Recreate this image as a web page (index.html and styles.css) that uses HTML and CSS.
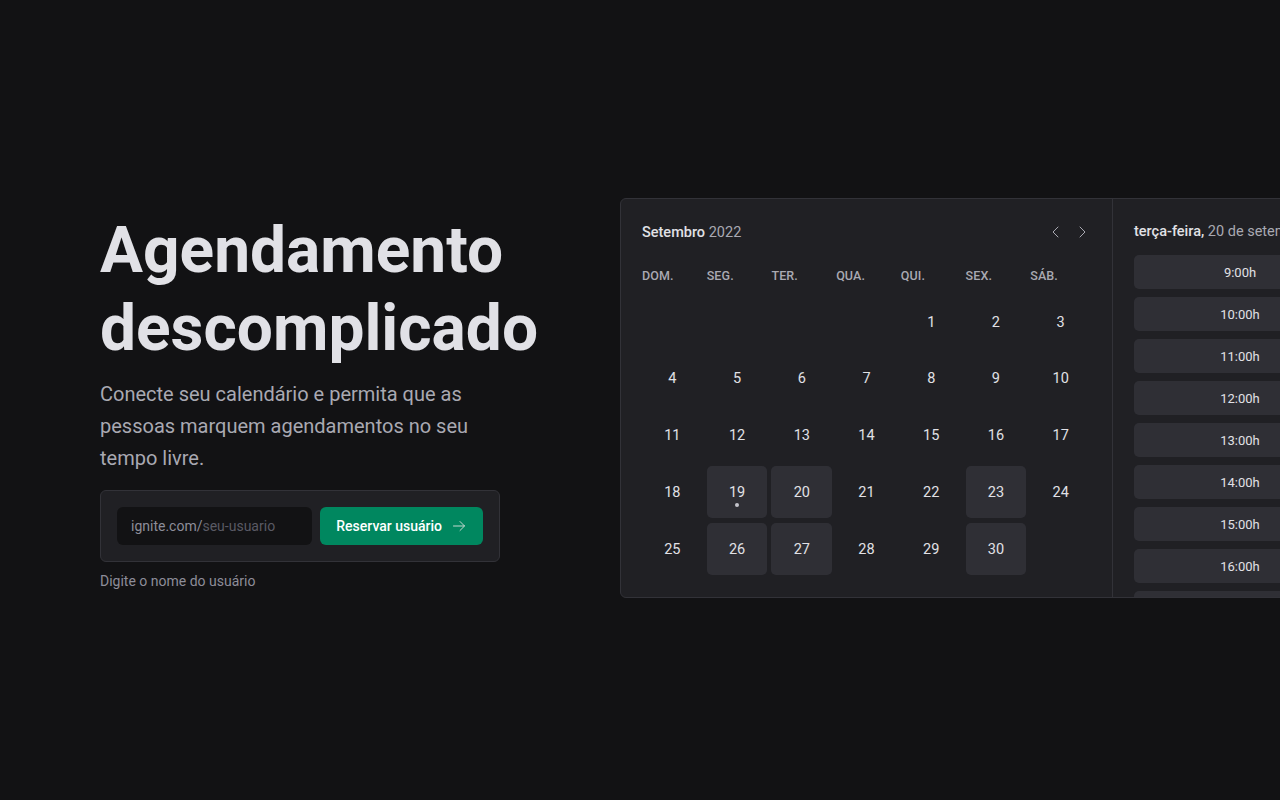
FILE: index.html
```html
<!DOCTYPE html>
<html lang="pt-BR">
<head>
<meta charset="utf-8">
<title>Ignite Call</title>
<link rel="stylesheet" href="styles.css">
</head>
<body>
<main class="container">
  <section class="hero">
    <h1 class="title">Agendamento descomplicado</h1>
    <p class="lead">Conecte seu calendário e permita que as pessoas marquem agendamentos no seu tempo livre.</p>
    <form class="claim">
      <label class="input">
        <span class="prefix">ignite.com/</span>
        <input type="text" placeholder="seu-usuario">
      </label>
      <button type="button" class="btn">
        Reservar usuário
        <svg width="16" height="16" viewBox="0 0 256 256" aria-hidden="true"><path d="M40 128h176M144 56l72 72-72 72" fill="none" stroke="currentColor" stroke-width="16" stroke-linecap="round" stroke-linejoin="round"/></svg>
      </button>
    </form>
    <p class="annotation">Digite o nome do usuário</p>
  </section>

  <section class="preview">
    <div class="calendar">
      <div class="cal-header">
        <p class="cal-title">Setembro <span>2022</span></p>
        <div class="cal-actions">
          <button type="button" class="nav"><svg width="16" height="16" viewBox="0 0 256 256"><path d="M160 208l-80-80 80-80" fill="none" stroke="currentColor" stroke-width="16" stroke-linecap="round" stroke-linejoin="round"/></svg></button>
          <button type="button" class="nav"><svg width="16" height="16" viewBox="0 0 256 256"><path d="M96 48l80 80-80 80" fill="none" stroke="currentColor" stroke-width="16" stroke-linecap="round" stroke-linejoin="round"/></svg></button>
        </div>
      </div>
      <div class="grid weekdays">
        <div class="wd">DOM.</div><div class="wd">SEG.</div><div class="wd">TER.</div><div class="wd">QUA.</div><div class="wd">QUI.</div><div class="wd">SEX.</div><div class="wd">SÁB.</div>
      </div>
      <div class="grid days">
        <div></div><div></div><div></div><div></div>
        <div class="day">1</div><div class="day">2</div><div class="day">3</div>
        <div class="day">4</div><div class="day">5</div><div class="day">6</div><div class="day">7</div><div class="day">8</div><div class="day">9</div><div class="day">10</div>
        <div class="day">11</div><div class="day">12</div><div class="day">13</div><div class="day">14</div><div class="day">15</div><div class="day">16</div><div class="day">17</div>
        <div class="day">18</div><div class="day avail today">19</div><div class="day avail">20</div><div class="day">21</div><div class="day">22</div><div class="day avail">23</div><div class="day">24</div>
        <div class="day">25</div><div class="day avail">26</div><div class="day avail">27</div><div class="day">28</div><div class="day">29</div><div class="day avail">30</div><div></div>
      </div>
    </div>
    <div class="times">
      <p class="times-title">terça-feira, <span>20 de setembro</span></p>
      <div class="time-list">
        <div class="time">9:00h</div>
        <div class="time">10:00h</div>
        <div class="time">11:00h</div>
        <div class="time">12:00h</div>
        <div class="time">13:00h</div>
        <div class="time">14:00h</div>
        <div class="time">15:00h</div>
        <div class="time">16:00h</div>
        <div class="time">17:00h</div>
      </div>
    </div>
  </section>
</main>
</body>
</html>
```
FILE: styles.css
```css
* { box-sizing: border-box; }
html, body { margin: 0; padding: 0; }
body {
  background: #121214;
  color: #e1e1e6;
  font-family: Roboto, "Noto Sans", sans-serif;
  height: 800px;
  overflow: hidden;
  -webkit-font-smoothing: antialiased;
}
.container {
  margin-left: 60px;
  height: 800px;
  display: flex;
  align-items: center;
  gap: 80px;
}
.hero {
  width: 480px;
  flex-shrink: 0;
  padding: 0 40px;
}
.title {
  margin: 0;
  padding-top: 3px;
  font-size: 64px;
  line-height: 78px;
  font-weight: 700;
  color: #e1e1e6;
}
.lead {
  margin: 10px 0 0;
  font-size: 20px;
  line-height: 32px;
  color: #a9a9b2;
}
.claim {
  margin-top: 16px;
  display: grid;
  grid-template-columns: minmax(0, 1fr) auto;
  gap: 8px;
  padding: 16px;
  background: #202024;
  border: 1px solid #323238;
  border-radius: 6px;
}
.input {
  display: flex;
  align-items: center;
  min-width: 0;
  height: 38px;
  padding: 0 14px;
  background: #121214;
  border-radius: 6px;
  font-size: 14px;
}
.prefix { color: #8d8d99; }
.input input {
  flex: 1;
  width: 0;
  min-width: 0;
  background: transparent;
  border: 0;
  outline: 0;
  padding: 0;
  font: inherit;
  color: #e1e1e6;
}
.input input::placeholder { color: #5a5a64; }
.btn {
  display: flex;
  align-items: center;
  gap: 9px;
  height: 38px;
  padding: 0 16px;
  background: #00875f;
  color: #fff;
  border: 0;
  border-radius: 6px;
  font-family: inherit;
  font-size: 14px;
  font-weight: 500;
  white-space: nowrap;
}
.btn svg { color: #c4d8d0; }
.annotation {
  margin: 8px 0 0;
  font-size: 14px;
  line-height: 22px;
  color: #8d8d99;
}

.preview {
  flex-shrink: 0;
  display: flex;
  height: 400px;
  margin-top: -4px;
  background: #202024;
  border: 1px solid #323238;
  border-radius: 6px;
  overflow: hidden;
}
.calendar {
  width: 491px;
  padding: 21px 21px 0;
}
.cal-header {
  display: flex;
  align-items: center;
  justify-content: space-between;
  height: 24px;
}
.cal-title {
  margin: 0;
  font-size: 14.5px;
  font-weight: 500;
  color: #e1e1e6;
}
.cal-title span { color: #a9a9b2; font-weight: 400; }
.cal-actions { display: flex; gap: 10px; margin-right: 1px; }
.nav {
  display: flex;
  padding: 0;
  background: none;
  border: 0;
  color: #a9a9b2;
}
.grid {
  display: grid;
  grid-template-columns: repeat(7, 1fr);
  column-gap: 4px;
}
.weekdays { margin-top: 22px; }
.wd {
  height: 20px;
  line-height: 20px;
  font-size: 12.5px;
  font-weight: 500;
  letter-spacing: 0.1px;
  color: #a9a9b2;
}
.days {
  margin-top: 10px;
  grid-auto-rows: 52px;
  row-gap: 4.75px;
}
.day {
  position: relative;
  display: flex;
  align-items: center;
  justify-content: center;
  font-size: 14.5px;
  color: #e1e1e6;
  border-radius: 5px;
}
.day.avail { background: #2f2f35; }
.day.today::after {
  content: "";
  position: absolute;
  left: 50%;
  bottom: 11px;
  width: 4px;
  height: 4px;
  margin-left: -2px;
  border-radius: 50%;
  background: #c4c4cc;
}
.times {
  width: 256px;
  border-left: 1px solid #323238;
  padding: 21px 0 0 21px;
  overflow: hidden;
}
.times-title {
  margin: 0;
  height: 24px;
  line-height: 24px;
  font-size: 14.5px;
  font-weight: 500;
  color: #e1e1e6;
  white-space: nowrap;
}
.times-title span { color: #a9a9b2; font-weight: 400; }
.time-list {
  margin-top: 11px;
  display: flex;
  flex-direction: column;
  gap: 8px;
}
.time {
  width: 212px;
  height: 34px;
  flex-shrink: 0;
  display: flex;
  align-items: center;
  justify-content: center;
  background: #2f2f35;
  border-radius: 5px;
  font-size: 13px;
  color: #e1e1e6;
}
```
